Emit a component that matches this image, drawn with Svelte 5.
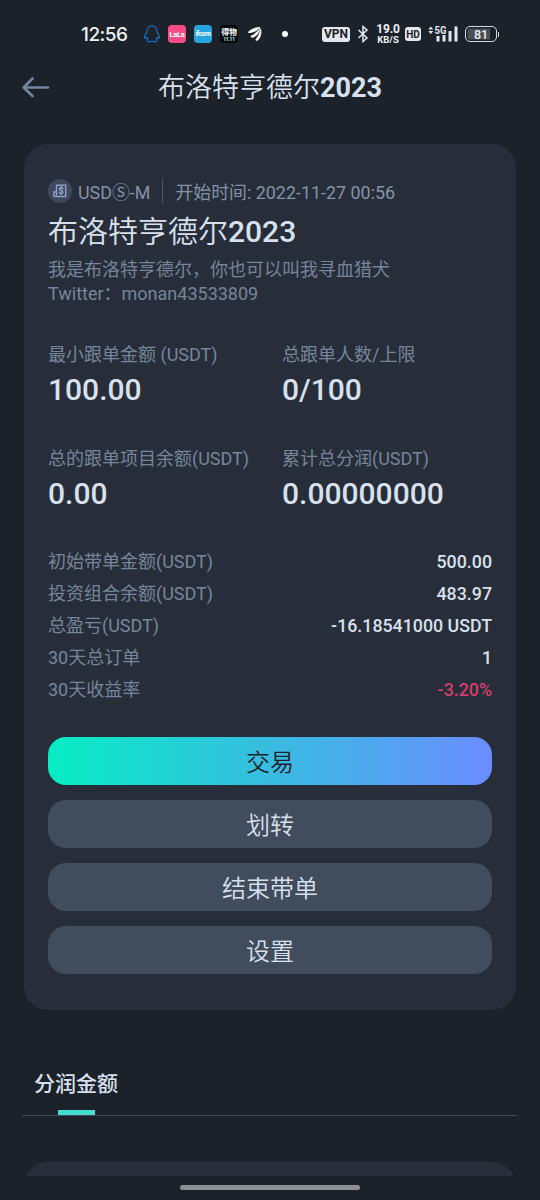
<script lang="ts">
	interface Row {
		label: string;
		value: string;
		negative?: boolean;
	}

	const user = '布洛特亨德尔';
	const year = '2023';

	const stats: Row[] = [
		{ label: '最小跟单金额 (USDT)', value: '100.00' },
		{ label: '总跟单人数/上限', value: '0/100' },
		{ label: '总的跟单项目余额(USDT)', value: '0.00' },
		{ label: '累计总分润(USDT)', value: '0.00000000' }
	];

	const rows: Row[] = [
		{ label: '初始带单金额(USDT)', value: '500.00' },
		{ label: '投资组合余额(USDT)', value: '483.97' },
		{ label: '总盈亏(USDT)', value: '-16.18541000 USDT' },
		{ label: '30天总订单', value: '1' },
		{ label: '30天收益率', value: '-3.20%', negative: true }
	];

	const actions = ['交易', '划转', '结束带单', '设置'];
</script>

<div class="screen">
	<div class="status">
		<span class="time">12:56</span>
		<svg class="qq" width="18" height="18" viewBox="0 0 18 18" fill="none" stroke="#1d62b5" stroke-width="1.4" stroke-linejoin="round">
			<path d="M9 1C5.500 1 3.900 3.300 4 6.800 2.800 8.500 1.600 10.300 1.700 12.600c.1 1.100 1.200.8 1.900-.3.3 1 .8 1.700 1.400 2.300-1.200.5-1.200 2 .4 2.200 1.500.1 2.500-.1 3.600-.6 1.100.5 2.100.7 3.600.6 1.600-.2 1.600-1.700.4-2.200.6-.6 1.100-1.300 1.400-2.300.7 1.100 1.800 1.400 1.900.3.100-2.300-1.100-4.100-2.300-5.800C14.100 3.300 12.500 1 9 1z" />
		</svg>
		<span class="app pink">LaLa</span>
		<span class="app blue">ifcom</span>
		<span class="app black"><b>得物</b><i>11.11</i></span>
		<svg class="wing" width="16" height="18" viewBox="0 0 16 18" fill="#f4f6f8">
			<path d="M1 7C4 3.500 8.500 2 13.500 2 11.500 4.800 8 7.300 3.300 8 2 8.200 1 8 1 7z" />
			<path d="M3.600 11C7.500 9.300 11 6.200 13.300 2.600 13 7.500 10 11.500 5.700 12.800 4.300 13 3.300 12 3.600 11z" />
			<path d="M8.600 14.200C11 11.400 13 7.500 13.900 2.800 15.200 8 14 12.800 10.800 15.600 9.500 16.300 8.300 15.300 8.600 14.200z" />
		</svg>
		<span class="dot"></span>
		<span class="vpn">VPN</span>
		<svg class="bt" width="12" height="18" viewBox="0 0 12 18" fill="none" stroke="#e4e8ee" stroke-width="1.500">
			<path d="M1.500 5l8.500 8-4 3.500v-15L10 5l-8.500 8" />
		</svg>
		<span class="speed"><b>19.0</b><i>KB/S</i></span>
		<span class="hd">HD</span>
		<svg class="signal" width="32" height="18" viewBox="0 0 32 18" fill="#e4e8ee">
			<path d="M0.300 4.500L2.800 1.500l2.500 3zM0.300 6L2.800 9l2.500-3z" />
			<text x="6.500" y="8.500" class="five" textLength="12" lengthAdjust="spacingAndGlyphs">5G</text>
			<path d="M8.500 11h3v5.500h-3zM14.500 10h3v6.500h-3zM20.500 6h3v10.500h-3zM26.500 1.500h3v15h-3z" />
		</svg>
		<span class="battery">81</span>
		<span class="nub"></span>
	</div>

	<header class="topbar">
		<button type="button" class="back" aria-label="返回">
			<svg width="28" height="22" viewBox="0 0 28 22" fill="none" stroke="#7386a2" stroke-width="2.600" stroke-linecap="round" stroke-linejoin="round">
				<path d="M10.500 1.500L1.700 10.500l8.800 8.500M2 10.500h24" />
			</svg>
		</button>
		<h1>{user}<b>{year}</b></h1>
	</header>

	<main>
		<section class="card">
			<div class="meta">
				<span class="coin">
					<svg width="14" height="14" viewBox="0 0 14 14" fill="none" stroke="#919fce" stroke-width="1.400">
						<path d="M3.500 10V1.200h9.200v11.300H2.200C1.200 12.500.8 12 .8 11V8h2.700v3.500" />
						<text x="5.400" y="10.200" class="dollar">$</text>
					</svg>
				</span>
				<span class="market">USDⓈ-M</span>
				<span class="divider"></span>
				<span>开始时间: 2022-11-27 00:56</span>
			</div>
			<h2>{user}<b>{year}</b></h2>
			<p>我是布洛特亨德尔，你也可以叫我寻血猎犬<br />Twitter：monan43533809</p>

			<div class="stats">
				{#each stats as stat}
					<div class="stat">
						<span class="label">{stat.label}</span>
						<span class="amount">{stat.value}</span>
					</div>
				{/each}
			</div>

			<div class="rows">
				{#each rows as row}
					<div class="row">
						<span class="label">{row.label}</span>
						<span class="value" class:negative={row.negative}>{row.value}</span>
					</div>
				{/each}
			</div>

			<div class="actions">
				{#each actions as action, i}
					<button type="button" class="action" class:primary={i === 0}>{action}</button>
				{/each}
			</div>
		</section>

		<nav class="tabs">
			<button type="button" class="tab">分润金额</button>
		</nav>

		<div class="peek">
			<section class="next-card"></section>
		</div>
	</main>

	<div class="home"><span></span></div>
</div>

<style>
	:global(body) {
		background: #1c2229;
	}

	.screen {
		display: flex;
		flex-direction: column;
		width: 540px;
		height: 1200px;
		overflow: hidden;
		background: #1c2229;
		color: #d9e0ed;
		font-family: Roboto, 'Noto Sans CJK SC', sans-serif;
	}

	button {
		border: 0;
		padding: 0;
		background: none;
		color: inherit;
		font-family: inherit;
	}

	.status {
		display: flex;
		align-items: center;
		height: 68px;
		padding-left: 81px;
		box-sizing: border-box;
		color: #eef1f5;
	}

	.status > * {
		flex-shrink: 0;
	}

	.time {
		width: 48px;
		font: 500 19px Inter, sans-serif;
		letter-spacing: -0.5px;
		white-space: nowrap;
	}

	.qq {
		margin-left: 14px;
	}

	.app {
		display: flex;
		align-items: center;
		justify-content: center;
		width: 18px;
		height: 18px;
		margin-left: 8px;
		border-radius: 4px;
		color: #fff;
		font: 700 7.5px Roboto, sans-serif;
		letter-spacing: -0.3px;
	}

	.pink {
		margin-left: 7px;
		background: #fa4b86;
	}

	.blue {
		background: #26a5de;
		font-size: 6.5px;
	}

	.black {
		flex-direction: column;
		background: #030607;
		line-height: 1;
	}

	.black b {
		font: 700 8px/9px 'Noto Sans CJK SC', sans-serif;
	}

	.black i {
		font: 700 5px/6px Roboto, sans-serif;
		color: #b7f4ee;
	}

	.wing {
		margin-left: 9px;
	}

	.dot {
		width: 6px;
		height: 6px;
		margin-left: 19px;
		border-radius: 50%;
		background: #fff;
	}

	.vpn,
	.hd {
		display: flex;
		align-items: center;
		justify-content: center;
		height: 15px;
		border-radius: 3px;
		background: #e4e8ee;
		color: #1c2229;
		font: 700 12px/15px Roboto, sans-serif;
	}

	.vpn {
		width: 28px;
		margin-left: 34px;
	}

	.bt {
		margin-left: 7px;
	}

	.speed {
		display: flex;
		flex-direction: column;
		align-items: center;
		width: 24px;
		margin-left: 7px;
	}

	.speed b {
		font: 700 12px/11px Roboto, sans-serif;
		letter-spacing: -0.2px;
	}

	.speed i {
		font: 700 9.5px/9px Roboto, sans-serif;
	}

	.hd {
		width: 16px;
		height: 14px;
		margin-left: 5px;
		font-size: 10px;
	}

	.signal {
		margin-left: 7px;
	}

	.five {
		font: 700 11px Roboto, sans-serif;
	}

	.battery {
		display: flex;
		align-items: center;
		justify-content: center;
		width: 32px;
		height: 16px;
		margin-left: 5px;
		border: 1.5px solid #d5d9df;
		border-radius: 5px;
		box-sizing: border-box;
		background: linear-gradient(90deg, #4b5058 80%, #1c2229 80%);
		box-shadow: inset 0 0 0 1.5px #1c2229;
		font: 500 12.5px Roboto, sans-serif;
	}

	.nub {
		width: 1px;
		height: 5px;
		margin-left: 1px;
		background: #d5d9df;
	}

	.topbar {
		display: grid;
		grid-template-columns: 60px 1fr 60px;
		align-items: center;
		height: 38px;
	}

	.back {
		display: flex;
		padding-left: 22px;
	}

	h1,
	h2 {
		margin: 0;
		font-weight: 350;
		white-space: nowrap;
	}

	h1 {
		font-size: 27px;
		line-height: 40px;
		text-align: center;
	}

	h1 b {
		font-weight: 700;
	}

	main {
		display: flex;
		flex-direction: column;
		height: 1070px;
		padding: 38px 24px 0;
		box-sizing: border-box;
	}

	.card {
		flex-shrink: 0;
		height: 866px;
		padding: 35px 24px;
		border-radius: 24px;
		box-sizing: border-box;
		background: #272e39;
	}

	.meta {
		display: flex;
		align-items: center;
		height: 24px;
		color: #8492a9;
		font-size: 17.9px;
		white-space: nowrap;
	}

	.coin {
		display: flex;
		align-items: center;
		justify-content: center;
		width: 24px;
		height: 24px;
		border-radius: 50%;
		background: #3f495b;
	}

	.dollar {
		fill: #b0bbe3;
		stroke: none;
		font: 700 9px Roboto, sans-serif;
	}

	.market {
		margin-left: 6px;
	}

	.divider {
		width: 1px;
		height: 24px;
		margin: 0 12px;
		background: #4c596d;
	}

	h2 {
		margin-top: 11px;
		font-size: 30px;
		line-height: 36px;
	}

	h2 b {
		font-weight: 500;
	}

	p {
		margin: 8px 0 0;
		color: #76859c;
		font-size: 18px;
		line-height: 24px;
		white-space: nowrap;
	}

	.stats {
		display: grid;
		grid-template-columns: 234px 1fr;
		row-gap: 36px;
		margin-top: 37px;
	}

	.stat {
		display: flex;
		flex-direction: column;
		height: 68px;
		white-space: nowrap;
	}

	.label {
		color: #76859c;
		font-size: 18px;
		line-height: 24px;
	}

	.amount {
		margin-top: 5px;
		font-size: 30px;
		font-weight: 500;
		line-height: 36px;
	}

	.rows {
		margin-top: 31px;
	}

	.row {
		display: flex;
		align-items: center;
		justify-content: space-between;
		height: 32px;
	}

	.value {
		padding-bottom: 1px;
		font-size: 17.8px;
		font-weight: 500;
	}

	.negative {
		color: #d63d6c;
	}

	.actions {
		display: flex;
		flex-direction: column;
		gap: 15px;
		margin-top: 31px;
	}

	.action {
		height: 48px;
		padding-bottom: 1px;
		border-radius: 18px;
		background: #414c5c;
		font-size: 24px;
		font-weight: 350;
	}

	.primary {
		background: linear-gradient(90deg, #06edc3, #6b8cff);
		color: #1c2229;
	}

	.tabs {
		display: flex;
		flex-shrink: 0;
		height: 55px;
		margin: 50px -1px 0 -2px;
		border-bottom: 1px solid #414a55;
	}

	.tab {
		display: flex;
		flex-direction: column;
		align-items: center;
		padding: 8px 0 0 12px;
		font-size: 21px;
		font-weight: 500;
		line-height: 32px;
	}

	.tab::after {
		content: '';
		width: 37px;
		height: 5px;
		margin-top: 10px;
		background: #46dcd0;
	}

	.peek {
		height: 14px;
		margin-top: 46px;
		overflow: hidden;
	}

	.next-card {
		height: 120px;
		border-radius: 24px;
		background: #272e39;
	}

	.home {
		display: flex;
		justify-content: center;
		padding-top: 9px;
	}

	.home span {
		width: 180px;
		height: 5px;
		border-radius: 3px;
		background: #8c9094;
	}
</style>
